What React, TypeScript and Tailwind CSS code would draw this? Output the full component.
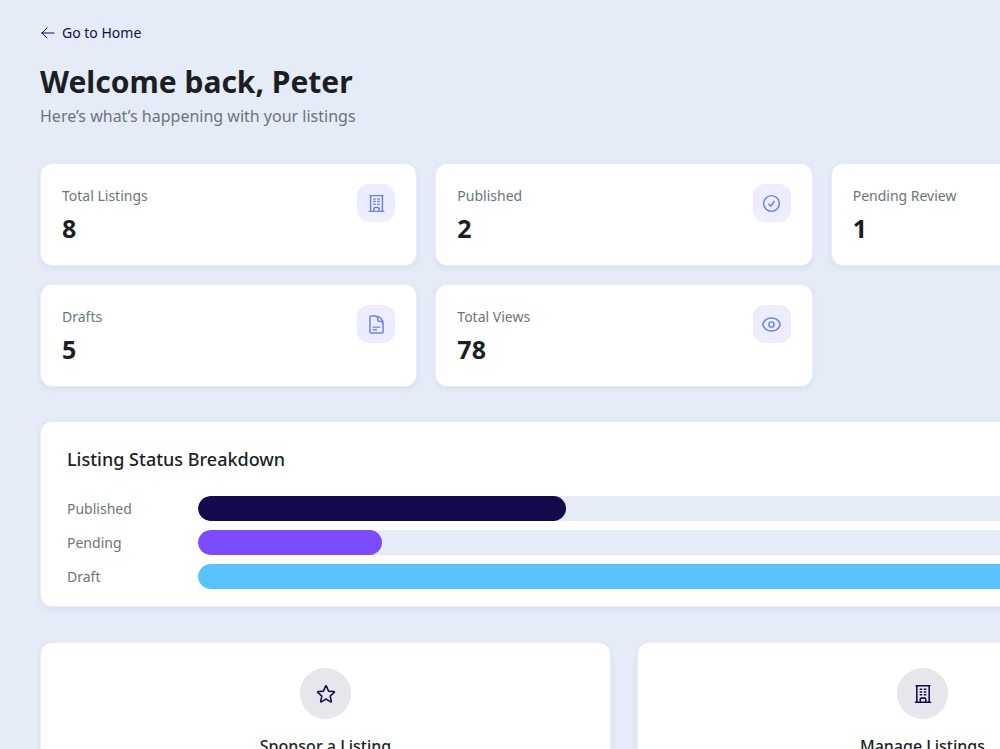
import type { IconType } from "react-icons";
import {
  HiOutlineArrowLeft,
  HiOutlineBuildingOffice,
  HiOutlineCheckCircle,
  HiOutlineClock,
  HiOutlineDocumentText,
  HiOutlineEye,
  HiOutlineStar,
} from "react-icons/hi2";

const stats: { label: string; value: number; icon: IconType }[] = [
  { label: "Total Listings", value: 8, icon: HiOutlineBuildingOffice },
  { label: "Published", value: 2, icon: HiOutlineCheckCircle },
  { label: "Pending Review", value: 1, icon: HiOutlineClock },
  { label: "Drafts", value: 5, icon: HiOutlineDocumentText },
  { label: "Total Views", value: 78, icon: HiOutlineEye },
];

const breakdown = [
  { label: "Published", count: 2, color: "bg-[#140b4f]" },
  { label: "Pending", count: 1, color: "bg-[#7c4aff]" },
  { label: "Draft", count: 5, color: "bg-[#59c2ff]" },
];

const actions: { title: string; icon: IconType }[] = [
  { title: "Sponsor a Listing", icon: HiOutlineStar },
  { title: "Manage Listings", icon: HiOutlineBuildingOffice },
];

const card = "bg-white border border-[#e9edf7] rounded-xl shadow-[0_2px_6px_rgba(20,11,79,0.06)]";

function StatCard({ label, value, icon: Icon }: { label: string; value: number; icon: IconType }) {
  return (
    <div className={`${card} flex items-start justify-between px-[21px] pt-5 pb-[19px]`}>
      <div>
        <p className="text-sm leading-[23px] text-[#6c757d]">{label}</p>
        <p className="mt-[3px] text-[25px] leading-9 font-bold text-[#1b1f24]">{value}</p>
      </div>
      <div className="flex size-[38px] items-center justify-center rounded-xl bg-[#ecedff] text-[#6f7fe6]">
        <Icon className="size-[21px] stroke-[1.7]" />
      </div>
    </div>
  );
}

export default function App() {
  const max = Math.max(...breakdown.map((row) => row.count));

  return (
    <div className="h-screen overflow-hidden bg-[#e5ebf7] font-['Noto_Sans',sans-serif]">
      <main className="min-w-[1248px] px-10 pt-[21px]">
        <a href="/" className="inline-flex items-center gap-1.5 text-sm leading-6 text-[#140b4f]">
          <HiOutlineArrowLeft className="size-4" />
          Go to Home
        </a>

        <header className="mt-[15px]">
          <h1 className="text-3xl leading-10 font-bold text-[#1b1f24]">Welcome back, Peter</h1>
          <p className="text-base leading-7 text-[#6c757d]">Here’s what’s happening with your listings</p>
        </header>

        <section className="mt-[33px] grid grid-cols-3 gap-[18px]">
          {stats.map((stat) => (
            <StatCard key={stat.label} {...stat} />
          ))}
        </section>

        <section className={`${card} mt-[34px] px-[26px] pt-[25px] pb-[17px]`}>
          <h2 className="text-lg leading-6 font-medium text-[#1b1f24]">Listing Status Breakdown</h2>
          <div className="mt-[25px] grid gap-[9px]">
            {breakdown.map((row) => (
              <div key={row.label} className="flex items-center">
                <span className="w-[131px] text-sm text-[#6c757d]">{row.label}</span>
                <div className="mr-[63px] h-[25px] flex-1 overflow-hidden rounded-full bg-[#e5ebf7]">
                  <div
                    className={`h-full rounded-full ${row.color}`}
                    style={{ width: `${(row.count / max) * 100}%` }}
                  />
                </div>
              </div>
            ))}
          </div>
        </section>

        <section className="mt-[35px] grid grid-cols-2 gap-[26px]">
          {actions.map(({ title, icon: Icon }) => (
            <div key={title} className={`${card} flex flex-col items-center px-6 py-[25px]`}>
              <div className="flex size-[51px] items-center justify-center rounded-full bg-[#e7e6ed] text-[#140b4f]">
                <Icon className="size-[22px] stroke-[1.7]" />
              </div>
              <h3 className="mt-[15px] text-base leading-6 font-medium text-[#1b1f24]">{title}</h3>
            </div>
          ))}
        </section>
      </main>
    </div>
  );
}
